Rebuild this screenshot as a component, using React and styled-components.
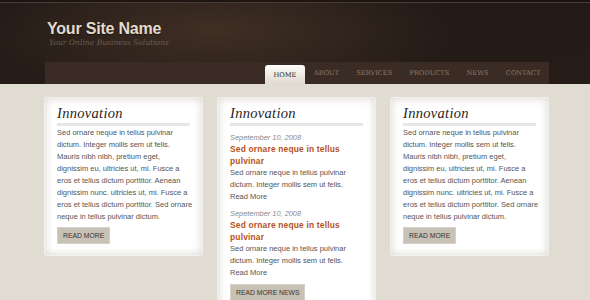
import React from "react";
import styled, { createGlobalStyle } from "styled-components";

const Global = createGlobalStyle`
  html, body { margin: 0; padding: 0; }
  body { background: #e0dcd2; font-family: "Liberation Sans", Arial, sans-serif; }
`;

const Header = styled.header`
  height: 84px;
  background:
    radial-gradient(ellipse 240px 70px at 215px 28px, rgba(85, 64, 48, 0.55), rgba(85, 64, 48, 0) 100%),
    linear-gradient(#231a16, #261c17);
  border-top: 2px solid #1c1512;
  box-shadow: inset 0 1px 0 #4b3b31;
  box-sizing: border-box;
`;

const Wrap = styled.div`
  width: 504px;
  margin-left: 45px;
`;

const Brand = styled.div`
  padding: 18px 0 0 2px;
  height: 42px;
  box-sizing: border-box;
`;

const SiteName = styled.h1`
  margin: 0;
  font-family: "Liberation Sans", Arial, sans-serif;
  font-weight: bold;
  font-size: 16px;
  line-height: 18px;
  letter-spacing: -0.2px;
  color: #e4dbcd;
  text-shadow: 0 1px 1px rgba(0,0,0,0.5);
`;

const Tagline = styled.div`
  font-family: "DejaVu Serif", serif;
  font-style: italic;
  font-size: 7.6px;
  line-height: 10px;
  color: #6a5c51;
  padding-left: 2px;
`;

const NavBar = styled.nav`
  height: 22px;
  margin-top: 18px;
  background: #3a2c24;
  display: flex;
  justify-content: flex-end;
  align-items: flex-end;
`;

const NavItem = styled.a`
  height: ${p => (p.$active ? "19px" : "22px")};
  padding: ${p => (p.$active ? "1px 9px 0" : "0 8.7px")};
  display: flex;
  align-items: center;
  font-family: "DejaVu Serif", serif;
  font-size: 6.6px;
  text-transform: uppercase;
  color: ${p => (p.$active ? "#2e261f" : "#8b7b6c")};
  background: ${p => (p.$active ? "linear-gradient(#ffffff, #e8e4db 70%, #e0dcd2)" : "transparent")};
  border-radius: ${p => (p.$active ? "3px 3px 0 0" : "0")};
  text-decoration: none;
  box-sizing: border-box;
`;

const Main = styled.main`
  width: 504px;
  margin: 14px 0 0 45px;
  display: grid;
  grid-template-columns: 157px 157px 157px;
  column-gap: 16px;
  align-items: start;
`;

const Card = styled.section`
  background: #fff;
  border-radius: 2px;
  box-shadow: inset 0 0 9px rgba(120, 110, 95, 0.3), 0 0 0 1px rgba(255,255,255,0.6);
  padding: 7px 9px 11px 12px;
  box-sizing: border-box;
  height: ${p => (p.$tall ? "auto" : "157px")};
`;

const Title = styled.h2`
  margin: 0 3px 0 0;
  font-family: "Liberation Serif", "Times New Roman", serif;
  font-style: italic;
  font-weight: normal;
  font-size: 14.5px;
  line-height: 17px;
  letter-spacing: 0.3px;
  color: #2a2420;
  padding-bottom: 1px;
  border-bottom: 3px solid #e6e6e6;
`;

const Text = styled.p`
  margin: ${p => p.$top || "1px"} 0 0 0;
  font-family: "Liberation Sans", Arial, sans-serif;
  font-size: 7.5px;
  line-height: 12px;
  color: #555;
`;

const MoreLink = styled.a`
  display: block;
  font-family: "Liberation Sans", Arial, sans-serif;
  font-size: 7.5px;
  line-height: 12px;
  color: #555;
  text-decoration: none;
`;

const DateLine = styled.div`
  margin-top: ${p => p.$top || "6px"};
  font-family: "Liberation Sans", Arial, sans-serif;
  font-style: italic;
  font-size: 7.4px;
  line-height: 11px;
  color: #8a8a8a;
`;

const Headline = styled.h3`
  margin: 0;
  font-family: "Liberation Sans", Arial, sans-serif;
  font-weight: bold;
  font-size: 8.4px;
  line-height: 12px;
  letter-spacing: 0.2px;
  color: #b5521c;
`;

const Button = styled.a`
  display: inline-block;
  margin-top: ${p => p.$top || "4px"};
  height: 17px;
  padding: 0 5px;
  background: #c8c1b5;
  border: 1px solid #d6d0c6;
  box-sizing: border-box;
  font-family: "Liberation Sans", Arial, sans-serif;
  font-size: 6.8px;
  line-height: 15px;
  color: #3a342e;
  text-transform: uppercase;
`;

const body =
  "Sed ornare neque in tellus pulvinar dictum. Integer mollis sem ut felis. Mauris nibh nibh, pretium eget, dignissim eu, ultricies ut, mi. Fusce a eros et tellus dictum porttitor. Aenean dignissim nunc. ultricies ut, mi. Fusce a eros et tellus dictum porttitor. Sed ornare neque in tellus pulvinar dictum.";

const news = [
  { id: 1, top: "6px" },
  { id: 2, top: "5px" },
];

export default function App() {
  return (
    <>
      <Global />
      <Header>
        <Wrap>
          <Brand>
            <SiteName>Your Site Name</SiteName>
            <Tagline>Your Online Business Solutions</Tagline>
          </Brand>
          <NavBar>
            <NavItem $active>Home</NavItem>
            <NavItem>About</NavItem>
            <NavItem>Services</NavItem>
            <NavItem>Products</NavItem>
            <NavItem>News</NavItem>
            <NavItem>Contact</NavItem>
          </NavBar>
        </Wrap>
      </Header>
      <Main>
        <Card>
          <Title>Innovation</Title>
          <Text>{body}</Text>
          <Button>Read More</Button>
        </Card>
        <Card $tall>
          <Title>Innovation</Title>
          {news.map(n => (
            <div key={n.id}>
              <DateLine $top={n.top}>Sepetember 10, 2008</DateLine>
              <Headline>Sed ornare neque in tellus pulvinar</Headline>
              <Text $top="0">Sed ornare neque in tellus pulvinar dictum. Integer mollis sem ut felis.</Text>
              <MoreLink>Read More</MoreLink>
            </div>
          ))}
          <Button $top="5px">Read More News</Button>
        </Card>
        <Card>
          <Title>Innovation</Title>
          <Text>{body}</Text>
          <Button>Read More</Button>
        </Card>
      </Main>
    </>
  );
}
